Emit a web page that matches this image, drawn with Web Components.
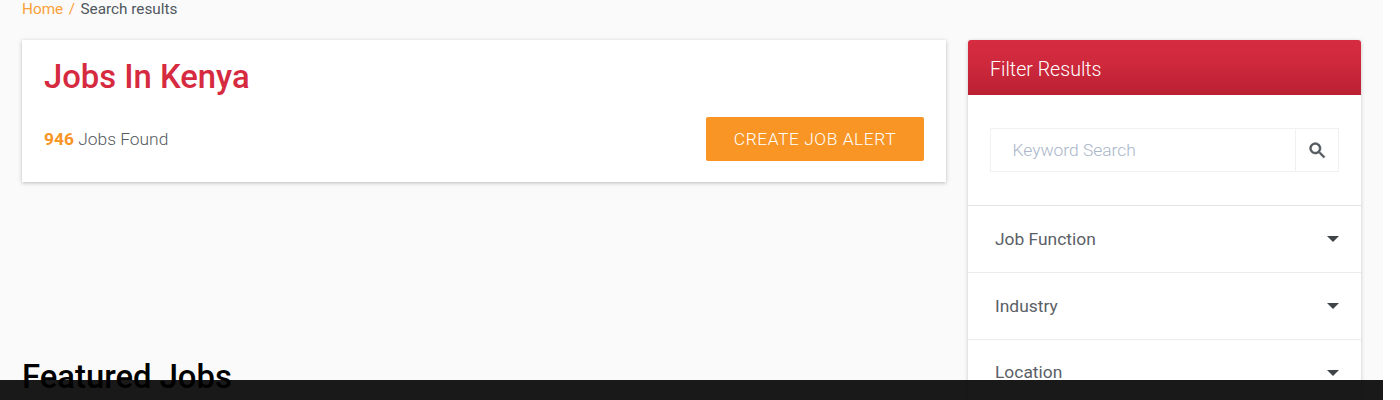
<!DOCTYPE html>
<html lang="en">
<head>
<meta charset="utf-8">
<title>Jobs In Kenya</title>
<style>
  html, body { margin: 0; height: 400px; overflow: hidden; background: #fff; }
  body { font-family: Roboto, "Liberation Sans", sans-serif; }
</style>
</head>
<body>
<job-page>
  <bread-crumbs slot="crumbs"></bread-crumbs>
  <results-card slot="main" heading="Jobs In Kenya" count="946"></results-card>
  <h2 slot="featured" style="margin:0;font:500 32.8px/38px Roboto,sans-serif;color:#000">Featured Jobs</h2>
  <filter-panel slot="side">
    <filter-row>Job Function</filter-row>
    <filter-row>Industry</filter-row>
    <filter-row>Location</filter-row>
  </filter-panel>
</job-page>
<cookie-bar></cookie-bar>

<script>
class JobPage extends HTMLElement {
  constructor() {
    super();
    this.attachShadow({ mode: 'open' });
    this.shadowRoot.innerHTML = `
      <style>
        :host { display: block; width: 1383px; height: 400px; background: #fafafa; overflow: hidden; }
        .crumbs { padding: 0 22px; height: 40px; }
        .cols { display: grid; grid-template-columns: 924px 393px; gap: 22px; padding: 0 22px; }
        .featured { margin-top: 176px; }
      </style>
      <div class="crumbs"><slot name="crumbs"></slot></div>
      <div class="cols">
        <div>
          <slot name="main"></slot>
          <div class="featured"><slot name="featured"></slot></div>
        </div>
        <div><slot name="side"></slot></div>
      </div>
    `;
  }
}

class BreadCrumbs extends HTMLElement {
  constructor() {
    super();
    this.attachShadow({ mode: 'open' });
    this.shadowRoot.innerHTML = `
      <style>
        :host { display: flex; gap: 5.5px; font-size: 15.3px; line-height: 18px; color: #50575d; }
        a, i { color: #f9a03a; font-style: normal; text-decoration: none; }
      </style>
      <a href="#">Home</a><i>/</i><span>Search results</span>
    `;
  }
}

class ResultsCard extends HTMLElement {
  constructor() {
    super();
    this.attachShadow({ mode: 'open' });
    this.shadowRoot.innerHTML = `
      <style>
        :host { display: block; height: 142px; box-sizing: border-box; padding: 18px 22px 0; background: #fff;
          box-shadow: 0 1px 4px rgba(0,0,0,.25); }
        h1 { margin: 0; font-size: 32.8px; line-height: 38px; font-weight: 500; color: #d62a40; }
        .row { display: flex; justify-content: space-between; align-items: center; margin-top: 21px; }
        .count { font-size: 17.4px; font-weight: 300; color: #555b61; }
        b { font-weight: 700; color: #f89525; }
        button { width: 218px; height: 44px; border: 0; border-radius: 2px; background: #f89525; color: #fff;
          font: 300 17.4px Roboto, sans-serif; letter-spacing: .55px; padding: 0; }
      </style>
      <h1>${this.getAttribute('heading')}</h1>
      <div class="row">
        <div class="count"><b>${this.getAttribute('count')}</b> Jobs Found</div>
        <button>CREATE JOB ALERT</button>
      </div>
    `;
  }
}

class FilterPanel extends HTMLElement {
  constructor() {
    super();
    this.attachShadow({ mode: 'open' });
    this.shadowRoot.innerHTML = `
      <style>
        :host { display: block; background: #fff; border-radius: 3px 3px 0 0; box-shadow: 0 1px 4px rgba(0,0,0,.2); }
        header { height: 55px; box-sizing: border-box; padding: 3px 0 0 22px; display: flex; align-items: center;
          border-radius: 3px 3px 0 0; font-size: 19.6px; font-weight: 300; color: #fff;
          background: linear-gradient(#d62b40 0%, #cf293d 40%, #bb2033 100%); }
        .search { padding: 33px 22px 33px 21.5px; display: flex; border-bottom: 1px solid #e4e4e4; }
        .box { display: flex; flex: 1; height: 44px; box-sizing: border-box; border: 1px solid #f1f1f1; }
        .input { flex: 1; padding-left: 22px; font-size: 17.4px; font-weight: 300; line-height: 43px; color: #a9b5c9; }
        .btn { width: 42px; border-left: 1px solid #f1f1f1; display: flex; align-items: center; justify-content: center; }
      </style>
      <header>Filter Results</header>
      <div class="search">
        <div class="box">
          <div class="input">Keyword Search</div>
          <div class="btn">
            <svg width="21" height="21" viewBox="0 0 24 24" fill="#50575d"><path d="M15.5 14h-.79l-.28-.27A6.47 6.47 0 0 0 16 9.5 6.5 6.5 0 1 0 9.5 16c1.61 0 3.09-.59 4.23-1.57l.27.28v.79l5 4.99L20.49 19l-4.99-5zm-6 0C7.01 14 5 11.99 5 9.5S7.01 5 9.5 5 14 7.01 14 9.5 11.99 14 9.5 14z" stroke="#50575d" stroke-width=".7"/></svg>
          </div>
        </div>
      </div>
      <slot></slot>
    `;
  }
}

class FilterRow extends HTMLElement {
  constructor() {
    super();
    this.attachShadow({ mode: 'open' });
    this.shadowRoot.innerHTML = `
      <style>
        :host { display: flex; align-items: center; justify-content: space-between; height: 65.8px; box-sizing: content-box;
          padding: 0 22px 0 27px; border-bottom: 1px solid #ececec; font-size: 17.4px; color: #5a6066; }
        .caret { width: 0; height: 0; border-left: 6px solid transparent; border-right: 6px solid transparent;
          border-top: 6px solid #3f4448; margin-top: 1px; }
      </style>
      <span><slot></slot></span><span class="caret"></span>
    `;
  }
}

class CookieBar extends HTMLElement {
  constructor() {
    super();
    this.attachShadow({ mode: 'open' });
    this.shadowRoot.innerHTML = `
      <style>
        :host { position: fixed; left: 0; bottom: 0; width: 1383px; height: 20px; background: rgba(0,0,0,.9); }
      </style>
    `;
  }
}

customElements.define('job-page', JobPage);
customElements.define('bread-crumbs', BreadCrumbs);
customElements.define('results-card', ResultsCard);
customElements.define('filter-panel', FilterPanel);
customElements.define('filter-row', FilterRow);
customElements.define('cookie-bar', CookieBar);
</script>
</body>
</html>
